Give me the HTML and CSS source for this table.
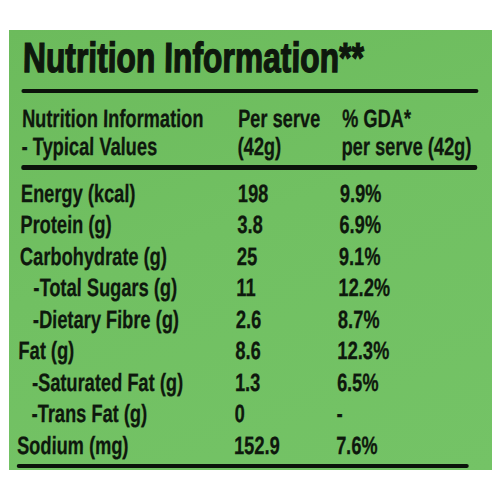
FILE: index.html
```html
<!DOCTYPE html>
<html>
<head>
<meta charset="utf-8">
<link rel="stylesheet" href="styles.css">
</head>
<body>
<div class="panel">
  <div class="sheet">
    <h1 class="title"><span class="sx-title">Nutrition Information**</span></h1>
    <div class="rule rule-top"></div>
    <div class="head">
      <span class="sx">Nutrition Information<br>- Typical Values</span>
      <span class="sx">Per serve<br>(42g)</span>
      <span class="sx">% GDA*<br>per serve (42g)</span>
    </div>
    <div class="rule rule-mid"></div>
    <div class="rows">
      <span class="sx">Energy (kcal)</span><span class="sx">198</span><span class="sx">9.9%</span>
      <span class="sx">Protein (g)</span><span class="sx">3.8</span><span class="sx">6.9%</span>
      <span class="sx">Carbohydrate (g)</span><span class="sx">25</span><span class="sx">9.1%</span>
      <span class="sx sub">-Total Sugars (g)</span><span class="sx">11</span><span class="sx">12.2%</span>
      <span class="sx sub">-Dietary Fibre (g)</span><span class="sx">2.6</span><span class="sx">8.7%</span>
      <span class="sx">Fat (g)</span><span class="sx">8.6</span><span class="sx">12.3%</span>
      <span class="sx sub">-Saturated Fat (g)</span><span class="sx">1.3</span><span class="sx">6.5%</span>
      <span class="sx sub">-Trans Fat (g)</span><span class="sx">0</span><span class="sx">-</span>
      <span class="sx">Sodium (mg)</span><span class="sx">152.9</span><span class="sx">7.6%</span>
    </div>
    <div class="rule rule-bottom"></div>
  </div>
</div>
</body>
</html>
```

FILE: styles.css
```css
html, body {
  margin: 0;
  padding: 0;
  background: #ffffff;
}
body {
  padding-top: 30px;
  padding-left: 9px;
}
.panel {
  width: 483px;
  height: 440px;
  box-sizing: border-box;
  background: linear-gradient(160deg, #6cbb5c 0%, #71c062 45%, #74c366 100%);
  padding: 3.5px 0 0 13.5px;
  font-family: "Liberation Sans", Arial, sans-serif;
  font-weight: bold;
  color: #0e180d;
  overflow: hidden;
}
.sheet {
  transform: skewX(-0.87deg);
  transform-origin: 0 20px;
}
.title {
  margin: 0;
  font-size: 42px;
  line-height: 48px;
  height: 48px;
  font-weight: bold;
  white-space: nowrap;
}
.sx-title {
  display: inline-block;
  transform: scaleX(0.757);
  transform-origin: 0 0;
  -webkit-text-stroke: 1.4px #0e180d;
}
.rule {
  background: #0b130a;
  border-radius: 2px;
}
.rule-top {
  height: 4.4px;
  width: 457px;
  margin-left: -1.5px;
  margin-top: 6.8px;
}
.rule-mid {
  height: 5px;
  width: 456px;
  margin-left: -0.5px;
  margin-top: 5.8px;
}
.rule-bottom {
  height: 4.5px;
  width: 452px;
  margin-left: -0.5px;
  margin-top: 2.3px;
}
.head {
  display: grid;
  grid-template-columns: 216px 104px auto;
  font-size: 25px;
  line-height: 28px;
  margin-top: 10.5px;
}
.rows {
  display: grid;
  grid-template-columns: 217px 102px auto;
  font-size: 25px;
  line-height: 31.5px;
  margin-top: 7.5px;
}
.sx {
  display: block;
  white-space: nowrap;
  transform: scaleX(0.73);
  transform-origin: 0 0;
  -webkit-text-stroke: 0.3px #0e180d;
}
.sub {
  margin-left: 14px;
}
```
